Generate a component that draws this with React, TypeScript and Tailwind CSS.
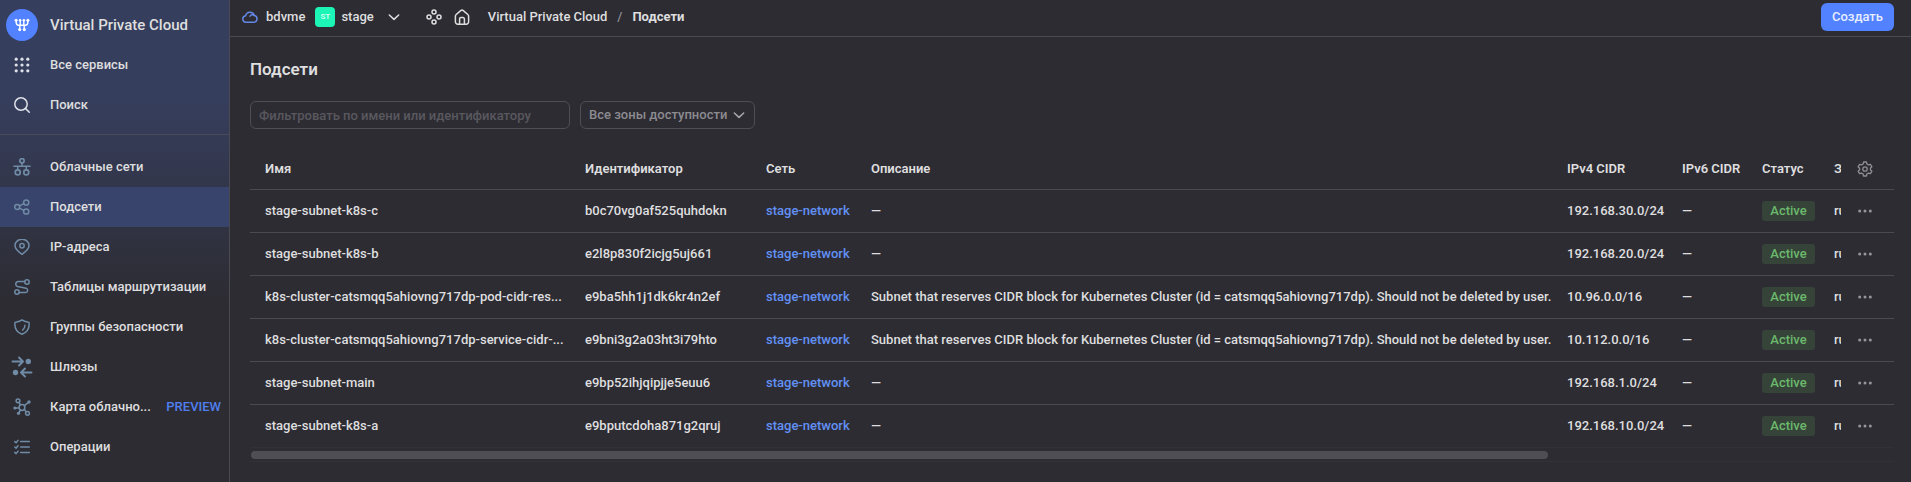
import React from "react";

type IconProps = { className?: string; children: React.ReactNode };

function Icon({ className = "size-4", children }: IconProps) {
  return (
    <svg
      viewBox="0 0 16 16"
      className={className}
      fill="none"
      stroke="currentColor"
      strokeWidth="1.5"
      strokeLinecap="round"
      strokeLinejoin="round"
      aria-hidden="true"
    >
      {children}
    </svg>
  );
}

const NetworksIcon = () => (
  <Icon className="size-[18px]">
    <circle cx="8" cy="2.4" r="1.9" strokeWidth="1.5" />
    <circle cx="4.2" cy="12.8" r="2.2" strokeWidth="1.5" />
    <circle cx="11.8" cy="12.8" r="2.2" strokeWidth="1.5" />
    <path d="M0.8 7.4h14.4M8 4.6v2.6M4.2 7.6v2.6M11.8 7.6v2.6" strokeWidth="1.3" />
  </Icon>
);

const SubnetsIcon = () => (
  <Icon>
    <circle cx="3.2" cy="8" r="2.5" />
    <circle cx="12.2" cy="3.5" r="2.6" />
    <circle cx="12.2" cy="12.5" r="2.6" />
    <path d="M5.5 6.9l4.3-2.2M5.5 9.1l4.3 2.2" />
  </Icon>
);

const AddressIcon = () => (
  <Icon>
    <path d="M8 15.3c-2.4-1.9-7-4.9-7-8.9a7 6.1 0 0 1 14 0c0 4-4.6 7-7 8.9z" />
    <circle cx="8" cy="6.8" r="2.2" />
  </Icon>
);

const RoutesIcon = () => (
  <Icon>
    <circle cx="13" cy="3" r="2.2" />
    <circle cx="3" cy="13" r="2.2" />
    <path d="M10.6 2.4H4.3a2.6 2.6 0 0 0-.8 5.05l8.6 1.7a2.3 2.3 0 0 1-.5 4.45H5.4" />
  </Icon>
);

const ShieldIcon = () => (
  <Icon>
    <path d="M8 .9c1.7 1.3 4.2 1.9 6.4 2.3.5 0 .8.4.8.9C15.3 9.7 12.6 13.6 8 15.2 3.4 13.6.7 9.7.8 4.1c0-.5.3-.9.8-.9C3.8 2.8 6.3 2.2 8 .9z" />
    <path d="M11 6.3c-.1 2-.9 3.6-2.4 4.8" />
  </Icon>
);

const GatewaysIcon = () => (
  <svg viewBox="0 0 22 22" className="size-[22px]" fill="none" stroke="currentColor" strokeWidth="1.9" strokeLinecap="round" strokeLinejoin="round" aria-hidden="true">
    <path d="M1.5 5.5h10M8 1.5l4 4-4 4M20.5 16.5h-10M14 12.5l-4 4 4 4" />
    <circle cx="17.3" cy="5.5" r="2.7" fill="currentColor" stroke="none" />
    <circle cx="4.5" cy="16.5" r="2.7" fill="currentColor" stroke="none" />
  </svg>
);

const MapIcon = () => (
  <svg viewBox="0 0 18 18" className="size-[18px]" fill="none" stroke="currentColor" strokeWidth="1.5" strokeLinecap="round" aria-hidden="true">
    <circle cx="9" cy="9.5" r="2.9" />
    <circle cx="5" cy="2.8" r="1.9" />
    <circle cx="14.5" cy="15.3" r="1.9" />
    <circle cx="16" cy="4" r="1.7" fill="currentColor" stroke="none" />
    <circle cx="1.9" cy="10" r="1.6" fill="currentColor" stroke="none" />
    <circle cx="5.5" cy="15.3" r="1.6" fill="currentColor" stroke="none" />
    <path d="M6 4.5l1.5 2.4M11.3 7.6L15.5 4.3M2 10h4M7.6 12l-2 3M11.3 11.5l1.9 2.3" />
  </svg>
);

const OperationsIcon = () => (
  <Icon>
    <path d="M6.6 2.6h8.7M6.6 8h8.7M6.6 13.4h8.7M.8 2.6l1.3 1.2L4 1.4M.8 8l1.3 1.2L4 6.8M.8 13.4l1.3 1.2L4 12.2" />
  </Icon>
);

const AppsIcon = () => (
  <svg viewBox="0 0 16 16" className="size-4" fill="currentColor" aria-hidden="true">
    {[2.2, 8, 13.8].map((y) =>
      [2.2, 8, 13.8].map((x) => <circle key={`${x}-${y}`} cx={x} cy={y} r="1.6" />)
    )}
  </svg>
);

const SearchIcon = () => (
  <Icon>
    <circle cx="7" cy="7" r="6.2" />
    <path d="M11.6 11.6l3.7 3.7" />
  </Icon>
);

const LogoIcon = () => (
  <svg viewBox="0 0 16 16" className="size-4" fill="none" stroke="white" strokeWidth="1.4" aria-hidden="true">
    <path d="M2.2 3v2.6c0 1.8 1 2.7 2.6 2.7h6.4c1.600 0 2.600-.9 2.600-2.700V3M6.200 3v5.300M9.800 3v5.300M5.800 8.300v4.200M10.200 8.300v4.200" />
    <g fill="white" stroke="none">
      <circle cx="2.1" cy="3.2" r="1.5" />
      <circle cx="6.1" cy="3.2" r="1.3" />
      <circle cx="9.9" cy="3.2" r="1.3" />
      <circle cx="13.9" cy="3.2" r="1.5" />
      <circle cx="5.7" cy="12.6" r="1.6" />
      <circle cx="10.3" cy="12.6" r="1.6" />
    </g>
  </svg>
);

const CloudIcon = () => (
  <Icon className="size-4 text-[#6488e8]">
    <path d="M4 13.2a3.2 3.2 0 0 1-.4-6.37A4.5 4.5 0 0 1 12.3 6.4 3.45 3.45 0 0 1 12 13.2z" />
    <path d="M8 7.3a2.7 2.7 0 0 1 4.2-.9" />
  </Icon>
);

const ChevronIcon = ({ className }: { className?: string }) => (
  <Icon className={className}>
    <path d="M3.3 6l4.7 4.4L12.7 6" />
  </Icon>
);

const ServicesIcon = () => (
  <Icon>
    <circle cx="8" cy="3" r="2" />
    <circle cx="8" cy="13" r="2" />
    <circle cx="3" cy="8" r="2" />
    <circle cx="13" cy="8" r="2" />
  </Icon>
);

const HomeIcon = () => (
  <Icon>
    <path d="M1.4 7.2c0-.7.3-1.3.8-1.7l4.5-3.9a2 2 0 0 1 2.6 0l4.5 3.9c.5.4.8 1 .8 1.7v5.6a2.4 2.4 0 0 1-2.4 2.4H3.8a2.4 2.4 0 0 1-2.4-2.4z" />
    <path d="M5.6 15V10a1.4 1.4 0 0 1 1.4-1.4h2A1.4 1.4 0 0 1 10.4 10v5" />
  </Icon>
);

const GearIcon = () => (
  <Icon>
    <path d="M6.6 1h2.8l.5 2 1.5.9 2-.6 1.5 2.5-1.5 1.4v1.6l1.5 1.4-1.5 2.5-2-.6-1.5.9-.5 2H6.6l-.5-2-1.5-.9-2 .6-1.5-2.5 1.5-1.4V7.2L1.1 5.8l1.5-2.5 2 .6L6.1 3z" strokeWidth="1.3" />
    <circle cx="8" cy="8" r="2.2" strokeWidth="1.3" />
  </Icon>
);

const DotsIcon = () => (
  <svg viewBox="0 0 16 16" className="size-4" fill="currentColor" aria-hidden="true">
    <circle cx="2.7" cy="8" r="1.5" />
    <circle cx="8" cy="8" r="1.5" />
    <circle cx="13.3" cy="8" r="1.5" />
  </svg>
);

const NAV = [
  { label: "Облачные сети", icon: <NetworksIcon /> },
  { label: "Подсети", icon: <SubnetsIcon />, active: true },
  { label: "IP-адреса", icon: <AddressIcon /> },
  { label: "Таблицы маршрутизации", icon: <RoutesIcon /> },
  { label: "Группы безопасности", icon: <ShieldIcon /> },
  { label: "Шлюзы", icon: <GatewaysIcon /> },
  { label: "Карта облачно...", icon: <MapIcon />, preview: true },
  { label: "Операции", icon: <OperationsIcon /> },
];

const RESERVED =
  "Subnet that reserves CIDR block for Kubernetes Cluster (id = catsmqq5ahiovng717dp). Should not be deleted by user.";

const ROWS = [
  { name: "stage-subnet-k8s-c", id: "b0c70vg0af525quhdokn", text: "—", v4: "192.168.30.0/24" },
  { name: "stage-subnet-k8s-b", id: "e2l8p830f2icjg5uj661", text: "—", v4: "192.168.20.0/24" },
  { name: "k8s-cluster-catsmqq5ahiovng717dp-pod-cidr-res...", id: "e9ba5hh1j1dk6kr4n2ef", text: RESERVED, v4: "10.96.0.0/16" },
  { name: "k8s-cluster-catsmqq5ahiovng717dp-service-cidr-...", id: "e9bni3g2a03ht3i79hto", text: RESERVED, v4: "10.112.0.0/16" },
  { name: "stage-subnet-main", id: "e9bp52ihjqipjje5euu6", text: "—", v4: "192.168.1.0/24" },
  { name: "stage-subnet-k8s-a", id: "e9bputcdoha871g2qruj", text: "—", v4: "192.168.10.0/24" },
];

function NavRow({ icon, label, active, preview, muted }: { icon: React.ReactNode; label: string; active?: boolean; preview?: boolean; muted?: boolean }) {
  return (
    <a
      href="#"
      aria-current={active ? "page" : undefined}
      className={`flex h-10 items-center pr-2 whitespace-nowrap ${active ? "bg-[#38446b]" : ""}`}
    >
      <span className={`flex w-11 shrink-0 justify-center ${muted ? "text-[#6f8ba6]" : "text-[#dfe1e8]"}`}>{icon}</span>
      <span className="ml-1.5">{label}</span>
      {preview && <span className="ml-auto text-[#4f7ff0]">PREVIEW</span>}
    </a>
  );
}

export default function App() {
  return (
    <div className="flex min-h-screen bg-[#2d2c33] font-['Roboto','Noto_Sans',sans-serif] text-[13px] leading-5 font-medium text-[#dededf]">
      <aside className="w-[230px] shrink-0 border-r border-[#4b4a50] bg-linear-to-b from-[#363e5d] from-[100px] to-[#2d2c33] to-[300px]">
        <div className="flex h-[45px] items-center pt-[5px]">
          <span className="ml-1.5 flex size-8 shrink-0 items-center justify-center rounded-full bg-[#5282ff]">
            <LogoIcon />
          </span>
          <span className="ml-3 text-[15px]">Virtual Private Cloud</span>
        </div>
        <NavRow icon={<AppsIcon />} label="Все сервисы" />
        <NavRow icon={<SearchIcon />} label="Поиск" />
        <div className="mt-[9px] mb-3 border-t border-[#4b4b57]" />
        <nav>
          {NAV.map((item) => (
            <NavRow key={item.label} {...item} muted />
          ))}
        </nav>
      </aside>

      <div className="min-w-0 flex-1">
        <header className="flex h-[37px] items-center border-b border-[#4b4a50] pb-0.5 pr-[17px] pl-3">
          <CloudIcon />
          <span className="ml-2">bdvme</span>
          <span className="ml-2.5 flex size-5 items-center justify-center rounded bg-[#1cf5b5] text-[8px] font-bold text-[#c9fff0]">ST</span>
          <button type="button" className="ml-1.5 flex items-center">
            stage
            <ChevronIcon className="ml-3 size-4" />
          </button>
          <button type="button" aria-label="Сервисы" className="ml-6">
            <ServicesIcon />
          </button>
          <a href="#" aria-label="Главная" className="ml-3">
            <HomeIcon />
          </a>
          <nav className="ml-[18px] flex">
            <a href="#">Virtual Private Cloud</a>
            <span className="mx-2.5 text-[#8f8e94]">/</span>
            <span className="font-bold">Подсети</span>
          </nav>
          <button type="button" className="ml-auto h-7 rounded-md bg-[#5282ff] px-[11px] text-[#e6edff]">
            Создать
          </button>
        </header>

        <main className="pr-[17px] pl-5">
          <h1 className="mt-5 text-[17px] leading-6 font-semibold">Подсети</h1>
          <div className="mt-5 flex gap-2.5">
            <input
              type="text"
              aria-label="Фильтр"
              placeholder="Фильтровать по имени или идентификатору"
              className="h-7 w-80 rounded-md border border-[#4f4e54] px-2 placeholder:text-[#59585e]"
            />
            <div className="relative text-[#8c8b90]">
              <select
                aria-label="Зона доступности"
                className="h-7 w-[175px] appearance-none rounded-md border border-[#4f4e54] px-2"
              >
                <option>Все зоны доступности</option>
              </select>
              <ChevronIcon className="pointer-events-none absolute top-1.5 right-2 size-4 text-[#a9a8ad]" />
            </div>
          </div>

          <table className="mt-5 w-full table-fixed text-left whitespace-nowrap">
            <colgroup>
              <col className="w-[325px]" />
              <col className="w-[181px]" />
              <col className="w-[105px]" />
              <col />
              <col className="w-[115px]" />
              <col className="w-20" />
              <col className="w-[72px]" />
              <col className="w-[17px]" />
              <col className="w-[53px]" />
            </colgroup>
            <thead>
              <tr className="h-10 border-b border-[#4b4a50] [&>th]:px-2.5 [&>th]:font-semibold">
                <th className="first:pl-[15px]">Имя</th>
                <th>Идентификатор</th>
                <th>Сеть</th>
                <th>Описание</th>
                <th>IPv4 CIDR</th>
                <th>IPv6 CIDR</th>
                <th>Статус</th>
                <th className="overflow-hidden pr-0!">З</th>
                <th className="pl-4!">
                  <button type="button" aria-label="Настройки" className="block text-[#8f8e94]">
                    <GearIcon />
                  </button>
                </th>
              </tr>
            </thead>
            <tbody>
              {ROWS.map((row) => (
                <tr key={row.id} className="h-[43px] border-b border-[#4b4a50] last:border-[#323138] [&>td]:px-2.5">
                  <td className="first:pl-[15px]">{row.name}</td>
                  <td>{row.id}</td>
                  <td>
                    <a href="#" className="text-[#6290f5]">stage-network</a>
                  </td>
                  <td>{row.text}</td>
                  <td>{row.v4}</td>
                  <td>—</td>
                  <td>
                    <span className="flex h-5 w-[53px] items-center justify-center rounded-[3px] bg-[#354339] text-[#6cb96c]">Active</span>
                  </td>
                  <td className="overflow-hidden pr-0!">ru</td>
                  <td className="pl-4!">
                    <button type="button" aria-label="Действия" className="block text-[#96959a]">
                      <DotsIcon />
                    </button>
                  </td>
                </tr>
              ))}
            </tbody>
          </table>
          <div className="border-b border-[#323138] px-px pt-[3px] pb-0.5">
            <div className="h-2 w-[79%] rounded-full bg-[#4f4e54]" />
          </div>
        </main>
      </div>
    </div>
  );
}
